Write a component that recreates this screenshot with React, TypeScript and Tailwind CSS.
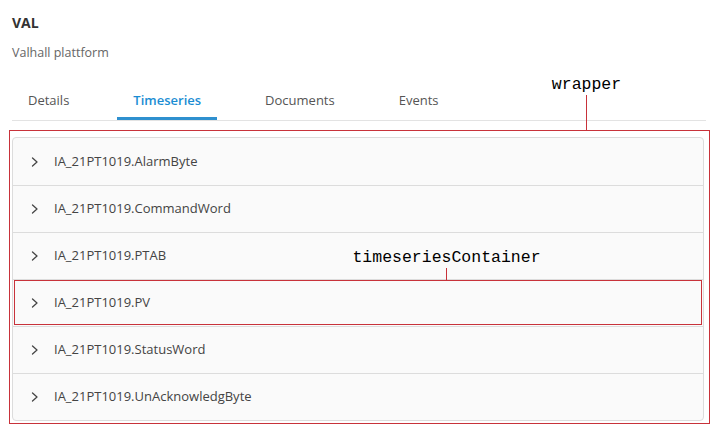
const series = [
  "IA_21PT1019.AlarmByte",
  "IA_21PT1019.CommandWord",
  "IA_21PT1019.PTAB",
  "IA_21PT1019.PV",
  "IA_21PT1019.StatusWord",
  "IA_21PT1019.UnAcknowledgByte",
];

const tabs = ["Details", "Timeseries", "Documents", "Events"];

// thin ">" like the original accordion toggle
function Chevron() {
  return (
    <svg width="8" height="10" viewBox="0 0 8 10" fill="none" className="shrink-0">
      <path d="M1.5 1 L6 5 L1.5 9" stroke="#444" strokeWidth="1.3" strokeLinecap="round" strokeLinejoin="round" />
    </svg>
  );
}

function Label({ text }: { text: string }) {
  return (
    <span className="absolute top-0 font-['Liberation_Mono',monospace] text-[16.5px] leading-[20px] text-black whitespace-nowrap">
      {text}
    </span>
  );
}

export default function App() {
  return (
    <div className="w-[714px] h-[428px] bg-white font-['Open_Sans',sans-serif] overflow-hidden">
      <div className="relative px-3 pt-[13px]">
        <h1 className="text-[14px] font-bold leading-[20px] text-[#333]">VAL</h1>
        <p className="mt-[10px] text-[12.5px] leading-[20px] text-[#666]">Valhall plattform</p>

        <nav className="mt-[27px] flex gap-8 border-b border-[#e3e3e3] w-[694px]">
          {tabs.map((t) => {
            const active = t === "Timeseries";
            return (
              <div
                key={t}
                className={`px-4 h-[30px] text-[13px] leading-[20px] ${
                  active ? "text-[#1b8dd3] font-semibold border-b-[3px] border-[#2f90cf] -mb-px" : "text-[#555]"
                }`}
              >
                {t}
              </div>
            );
          })}
        </nav>

        {/* wrapper */}
        <div className="relative mt-[9px] -ml-[3px] w-[701px] h-[294px] border border-[#c8323a] pl-[2px] pt-[6px]">
          <div className="absolute left-[576px] -top-[56px] h-[56px] flex flex-col items-center">
            <Label text="wrapper" />
            <div className="mt-[20px] w-px flex-1 bg-[#c8323a]" />
          </div>

          <div className="rounded border border-[#dcdcdc] bg-[#fafafa] w-[692px]">
            {series.map((s, i) => {
              const marked = s === "IA_21PT1019.PV";
              return (
                <div
                  key={s}
                  className={`relative flex items-center h-[47px] pl-[18px] gap-[15px] ${
                    i > 0 ? "border-t border-[#dcdcdc]" : ""
                  } ${marked ? "outline outline-1 outline-[#c8323a] -outline-offset-2" : ""}`}
                >
                  <Chevron />
                  <span className="text-[13px] text-[#444]">{s}</span>
                  {marked && (
                    <div className="absolute left-[433px] -top-[32px] h-[33px] flex flex-col items-center">
                      <Label text="timeseriesContainer" />
                      <div className="mt-[20px] w-px flex-1 bg-[#c8323a]" />
                    </div>
                  )}
                </div>
              );
            })}
          </div>
        </div>
      </div>
    </div>
  );
}
